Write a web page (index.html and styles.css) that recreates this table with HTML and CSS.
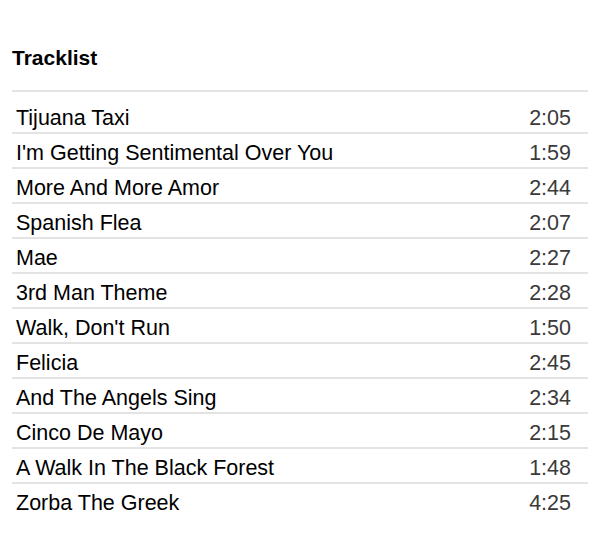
FILE: index.html
```html
<!DOCTYPE html>
<html>
<head>
<meta charset="utf-8">
<link rel="stylesheet" href="styles.css">
</head>
<body>
<section class="tracklist">
  <h2 class="title">Tracklist</h2>
  <ul class="tracks">
    <li class="track"><span class="name">Tijuana Taxi</span><span class="time">2:05</span></li>
    <li class="track"><span class="name">I'm Getting Sentimental Over You</span><span class="time">1:59</span></li>
    <li class="track"><span class="name">More And More Amor</span><span class="time">2:44</span></li>
    <li class="track"><span class="name">Spanish Flea</span><span class="time">2:07</span></li>
    <li class="track"><span class="name">Mae</span><span class="time">2:27</span></li>
    <li class="track"><span class="name">3rd Man Theme</span><span class="time">2:28</span></li>
    <li class="track"><span class="name">Walk, Don't Run</span><span class="time">1:50</span></li>
    <li class="track"><span class="name">Felicia</span><span class="time">2:45</span></li>
    <li class="track"><span class="name">And The Angels Sing</span><span class="time">2:34</span></li>
    <li class="track"><span class="name">Cinco De Mayo</span><span class="time">2:15</span></li>
    <li class="track"><span class="name">A Walk In The Black Forest</span><span class="time">1:48</span></li>
    <li class="track"><span class="name">Zorba The Greek</span><span class="time">4:25</span></li>
  </ul>
</section>
</body>
</html>
```
FILE: styles.css
```css
html, body {
  margin: 0;
  padding: 0;
  background: #fff;
}
body {
  font-family: "Liberation Sans", Arial, sans-serif;
  color: #000;
}
.tracklist {
  padding: 46px 12px 0 12px;
}
.title {
  margin: 0;
  font-size: 21px;
  font-weight: bold;
  line-height: 24px;
  padding-bottom: 20px;
  border-bottom: 2px solid #e3e3e3;
}
.tracks {
  list-style: none;
  margin: 0;
  padding: 7px 0 0 0;
}
.track {
  display: flex;
  justify-content: space-between;
  height: 27px;
  line-height: 26px;
  padding: 6px 17px 0 4px;
  font-size: 21.5px;
  border-bottom: 2px solid #e3e3e3;
}
.track:last-child {
  border-bottom: none;
}
.time {
  color: #3a3a3a;
}
```
